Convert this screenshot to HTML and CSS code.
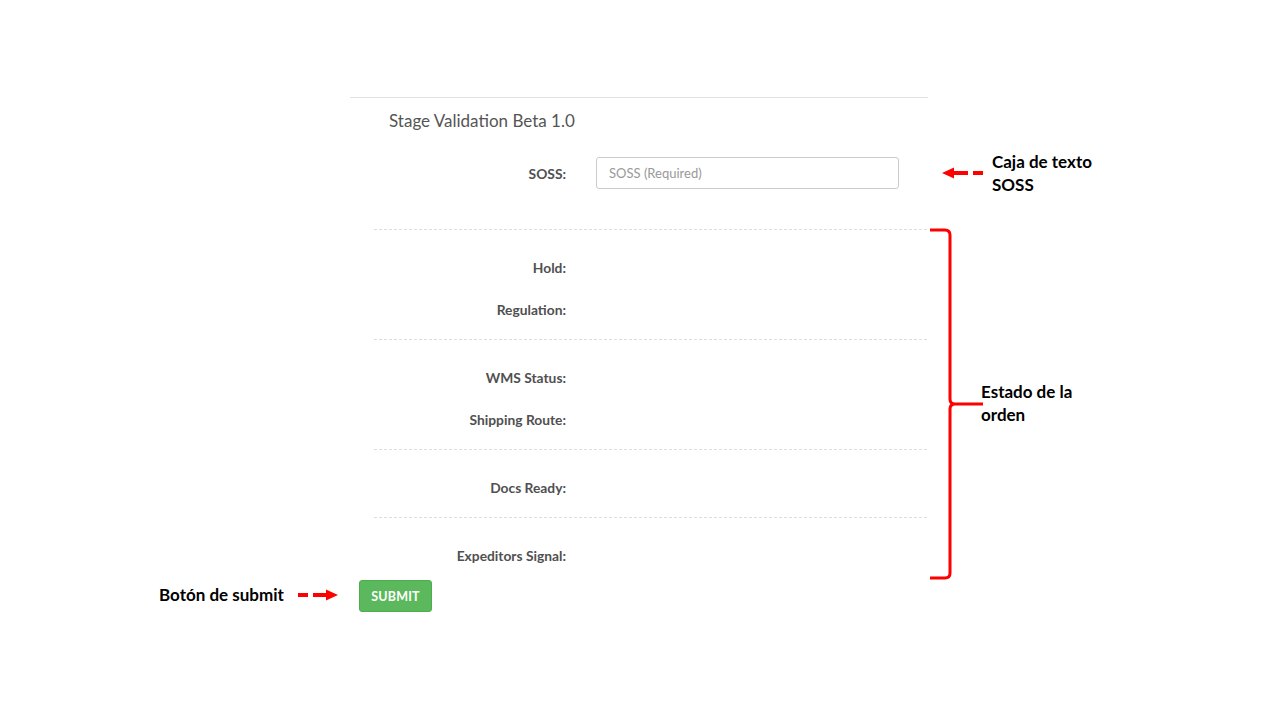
FILE: index.html
```html
<!DOCTYPE html>
<html lang="es">
<head>
<meta charset="utf-8">
<title>Stage Validation Beta 1.0</title>
<link rel="stylesheet" href="styles.css">
</head>
<body>
<div class="page">
  <div class="panel">
    <h1 class="title">Stage Validation Beta 1.0</h1>
    <div class="field-row">
      <label class="field-label" for="soss">SOSS:</label>
      <input class="field-input" id="soss" type="text" placeholder="SOSS (Required)">
    </div>
    <div class="section">
      <div class="row"><span class="row-label">Hold:</span></div>
      <div class="row"><span class="row-label">Regulation:</span></div>
    </div>
    <div class="section">
      <div class="row"><span class="row-label">WMS Status:</span></div>
      <div class="row"><span class="row-label">Shipping Route:</span></div>
    </div>
    <div class="section">
      <div class="row"><span class="row-label">Docs Ready:</span></div>
    </div>
    <div class="section section-last">
      <div class="row"><span class="row-label">Expeditors Signal:</span></div>
    </div>
    <button class="submit-btn" type="button">SUBMIT</button>
  </div>

  <svg class="arrow arrow-soss" width="44" height="14" viewBox="0 0 44 14">
    <polygon points="2,7 14,1.5 14,12.5" fill="#ff0000"/>
    <rect x="13" y="5" width="15" height="4" fill="#ff0000"/>
    <rect x="33" y="5" width="10" height="4" fill="#ff0000"/>
  </svg>
  <div class="note note-soss">Caja de texto<br>SOSS</div>

  <svg class="brace" width="70" height="354" viewBox="0 0 70 354">
    <path d="M2,2 H17 Q22,2 22,7 V171 Q22,176 27,176 H55 M27,176 Q22,176 22,181 V345 Q22,350 17,350 H2" fill="none" stroke="#ff0000" stroke-width="3"/>
  </svg>
  <div class="note note-estado">Estado de la<br>orden</div>

  <div class="note note-submit">Botón de submit</div>
  <svg class="arrow arrow-submit" width="44" height="14" viewBox="0 0 44 14">
    <rect x="1" y="5" width="10" height="4" fill="#ff0000"/>
    <rect x="16" y="5" width="15" height="4" fill="#ff0000"/>
    <polygon points="41,7 29,1.5 29,12.5" fill="#ff0000"/>
  </svg>
</div>
</body>
</html>
```

FILE: styles.css
```css
* { box-sizing: border-box; }

html, body {
  margin: 0;
  padding: 0;
  background: #ffffff;
}

body {
  font-family: Lato, "Open Sans", "Liberation Sans", sans-serif;
  color: #555555;
}

.page {
  position: relative;
  width: 1280px;
  height: 720px;
  padding-top: 97px;
}

.panel {
  width: 578px;
  margin-left: 350px;
  border-top: 1px solid #e3e3e3;
  display: flex;
  flex-direction: column;
}

.title {
  margin: 11px 0 0 39px;
  font-size: 17px;
  font-weight: 400;
  line-height: 24px;
  color: #555555;
}

.field-row {
  display: flex;
  align-items: center;
  margin-top: 24px;
}

.field-label {
  width: 216px;
  text-align: right;
  font-size: 13.8px;
  font-weight: 700;
  color: #505050;
}

.field-input {
  margin-left: 30px;
  width: 303px;
  height: 32px;
  border: 1px solid #cccccc;
  border-radius: 3px;
  padding: 0 12px;
  font-family: Lato, "Open Sans", "Liberation Sans", sans-serif;
  font-size: 13px;
  color: #555555;
  outline: none;
}

.field-input::placeholder {
  color: #999999;
}

.section {
  margin-left: 24px;
  margin-top: 40px;
  width: 553px;
  border-top: 1px dashed #dddddd;
  padding: 27px 0 20px;
  display: flex;
  flex-direction: column;
  gap: 22px;
}

.section + .section {
  margin-top: 0;
}

.section-last {
  padding-bottom: 15px;
}

.row {
  display: flex;
  height: 20px;
  align-items: center;
}

.row-label {
  width: 192px;
  text-align: right;
  font-size: 13.8px;
  font-weight: 700;
  color: #505050;
}

.submit-btn {
  align-self: flex-start;
  margin-left: 9px;
  width: 73px;
  height: 32px;
  background: #5cb85c;
  border: 1px solid #4cae4c;
  border-radius: 3px;
  color: #ffffff;
  font-family: Lato, "Open Sans", "Liberation Sans", sans-serif;
  font-size: 12.5px;
  font-weight: 700;
  padding: 0;
  letter-spacing: 0.2px;
}

.note {
  position: absolute;
  font-family: Lato, "Open Sans", "Liberation Sans", sans-serif;
  font-weight: 700;
  font-size: 17px;
  line-height: 23px;
  color: #000000;
}

.note-soss { left: 992px; top: 150px; }
.note-estado { left: 981px; top: 380px; }
.note-submit { left: 159px; top: 583px; }

.arrow { position: absolute; display: block; }
.arrow-soss { left: 940px; top: 166px; }
.arrow-submit { left: 297px; top: 588px; }

.brace { position: absolute; left: 928px; top: 228px; display: block; }
```
